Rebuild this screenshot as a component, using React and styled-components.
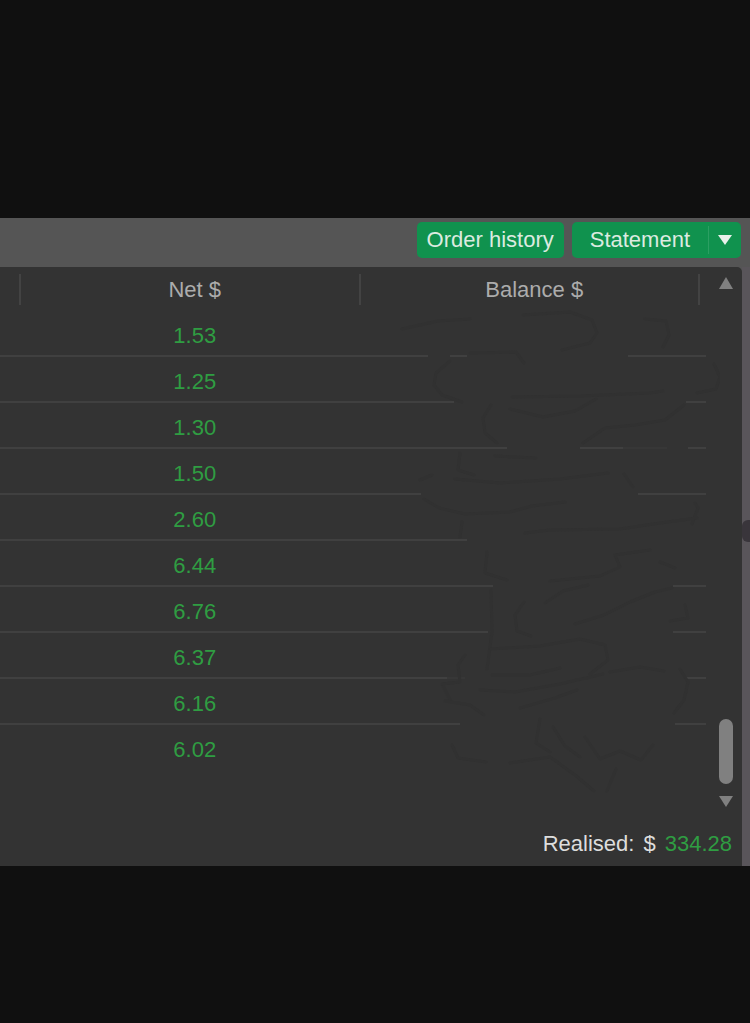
import React from "react";
import styled, { createGlobalStyle } from "styled-components";

const GlobalStyle = createGlobalStyle`
  * { box-sizing: border-box; }
  body {
    margin: 0;
    background: #101010;
    font-family: "Liberation Sans", Arial, sans-serif;
    font-size: 22px;
    line-height: 26px;
  }
  button { font: inherit; color: inherit; border: 0; padding: 0; background: none; cursor: pointer; }
`;

const Page = styled.main`
  min-height: 100vh;
  padding: 218px 0 156px;
`;

const Window = styled.section`
  background: #555555;
`;

const Toolbar = styled.div`
  display: flex;
  justify-content: flex-end;
  gap: 8px;
  padding: 4px 9px 9px;
`;

const ButtonGroup = styled.div`
  display: flex;
  height: 36px;
  align-items: center;
  border-radius: 5px;
  background: #10924e;
  color: #dcebe0;
`;

const TextButton = styled.button`
  height: 36px;
  padding: 0 ${(p) => p.$pad}px;
`;

const MenuButton = styled.button`
  display: flex;
  align-items: center;
  justify-content: center;
  width: 33px;
  height: 28px;
  border-left: 1px solid #2b9f62;
`;

const Content = styled.div`
  display: flex;
`;

const Panel = styled.div`
  flex: 1;
  min-width: 0;
  background: #333333;
  border-top-right-radius: 5px;
`;

const Ledger = styled.div`
  position: relative;
  display: flex;
`;

const TableArea = styled.div`
  flex: 1;
  min-width: 0;
  height: 545px;
`;

const Table = styled.table`
  width: 100%;
  table-layout: fixed;
  border-collapse: separate;
  border-spacing: 0;
`;

const Column = styled.col`
  width: ${(p) => (p.$width ? `${p.$width}px` : "auto")};
`;

const HeadCell = styled.th`
  height: 44px;
  padding: 7px 0 6px;
  font-weight: 400;
  color: #acacac;
`;

const HeadLabel = styled.div`
  height: 31px;
  padding-left: 10px;
  line-height: 31px;
  border-right: 2px solid ${(p) => (p.$blank ? "transparent" : "#434343")};
`;

const Cell = styled.td`
  height: 46px;
  padding: 5px 0 0 8px;
  text-align: center;
  color: #2f9d42;
  border-bottom: 2px solid ${(p) => (p.$last ? "transparent" : "#404040")};
`;

const Redaction = styled.svg`
  position: absolute;
  top: 43px;
  right: 22px;
  width: 340px;
  height: 490px;
  pointer-events: none;
`;

const ScrollBar = styled.div`
  display: flex;
  flex-direction: column;
  align-items: center;
  width: 36px;
  padding: 10px 0 5px 3px;
`;

const ScrollTrack = styled.div`
  flex: 1;
  display: flex;
  align-items: flex-end;
  padding-bottom: 12px;
`;

const ScrollThumb = styled.div`
  width: 14px;
  height: 65px;
  border-radius: 7px;
  background: #808080;
`;

const ArrowButton = styled.button`
  display: flex;
`;

const Footer = styled.footer`
  display: flex;
  justify-content: flex-end;
  gap: 9px;
  padding: 19px 10px 9px;
  color: #dddddd;
`;

const Amount = styled.output`
  color: #2f9d42;
`;

const SideStrip = styled.aside`
  width: 8px;
  padding-top: 253px;
  background: #59555a;
  overflow: hidden;
`;

const SideHandle = styled.button`
  display: block;
  width: 8px;
  height: 22px;
  border-radius: 6px 0 0 6px;
  background: #39353b;
`;

const entries = ["1.53", "1.25", "1.30", "1.50", "2.60", "6.44", "6.76", "6.37", "6.16", "6.02"];

function Triangle({ up, width, height, color }) {
  return (
    <svg width={width} height={height} viewBox="0 0 14 12" preserveAspectRatio="none" aria-hidden="true">
      <path d={up ? "M7 0 14 12H0Z" : "M0 0H14L7 12Z"} fill={color} />
    </svg>
  );
}

function BalanceCover() {
  return (
    <Redaction viewBox="380 310 340 490" aria-hidden="true">
      <g fill="#333333">
        <path d="M428 350H450V362H428ZM467 348H628V362H467Z" />
        <path d="M454 392H686V408H454ZM507 440H580V455H507ZM667 440H688V455H667Z" />
        <path d="M421 485H638V500H421ZM467 530H709V546H467Z" />
        <path d="M493 576H673V592H493ZM488 622H673V638H488Z" />
        <path d="M465 668H686V684H465ZM460 714H675V730H460Z" />
        <path d="M623 440H667V455H623ZM447 668H465V684H447Z" opacity="0.7" />
      </g>
      <g fill="none" stroke="#313131" strokeWidth="3" strokeLinecap="round" strokeLinejoin="round">
        <path d="M402 329 438 321 470 319M523 315 570 312 592 320 597 333 590 343 562 350M645 319 666 321 669 335 663 347" />
        <path d="M470 353 516 352 524 363M450 361 436 373 434 385 442 395 462 402M714 364 720 377 716 389 697 393" />
        <path d="M512 397 580 396 650 393 663 391M491 405 483 418 485 433 497 443M510 409 543 417 575 411 596 399" />
        <path d="M684 405 665 420 635 425 605 428 583 443M460 453 458 470 474 475M495 456 536 458M420 480 432 475" />
        <path d="M455 479 500 483 560 479 608 473M624 474 633 487M424 499 439 508 465 514 510 512 532 506 565 502" />
        <path d="M462 522 460 537M525 533 550 530 620 529 660 523 697 518M695 503 698 508 692 524" />
        <path d="M487 552 485 573 507 580M550 581 600 576 620 567 615 555 650 550M660 562 675 568" />
        <path d="M491 590 492 632 487 669M524 602 515 615 517 631 531 636M545 603 563 591 588 585" />
        <path d="M575 624 604 615 630 602 655 592 672 588M685 605 688 618 670 621" />
        <path d="M491 649 540 646 580 639 605 645 608 660 590 674M465 655 458 665 460 682 442 684 450 700" />
        <path d="M492 675 530 675 560 668M610 672 640 667 664 671M680 669 688 682 684 700 674 713" />
        <path d="M480 690 515 692 560 684 603 674M445 701 470 705 484 715M520 708 555 698 577 690" />
        <path d="M452 745 458 758 486 762M510 763 550 757 575 775 594 791M553 727 565 746 580 757" />
        <path d="M585 737 600 759 620 751 641 760 653 745M607 791 616 769M540 719 536 743 550 752" />
      </g>
    </Redaction>
  );
}

export default function App() {
  return (
    <>
      <GlobalStyle />
      <Page>
        <Window>
          <Toolbar>
            <ButtonGroup>
              <TextButton $pad={10}>Order history</TextButton>
            </ButtonGroup>
            <ButtonGroup>
              <TextButton $pad={18}>Statement</TextButton>
              <MenuButton aria-label="Statement options">
                <Triangle width={14} height={10} color="#e8f1eb" />
              </MenuButton>
            </ButtonGroup>
          </Toolbar>
          <Content>
            <Panel>
              <Ledger>
                <TableArea>
                  <Table>
                    <colgroup>
                      <Column $width={21} />
                      <Column />
                      <Column />
                      <Column $width={6} />
                    </colgroup>
                    <thead>
                      <tr>
                        <HeadCell as="td"><HeadLabel /></HeadCell>
                        <HeadCell scope="col"><HeadLabel>Net $</HeadLabel></HeadCell>
                        <HeadCell scope="col"><HeadLabel>Balance $</HeadLabel></HeadCell>
                        <HeadCell as="td"><HeadLabel $blank /></HeadCell>
                      </tr>
                    </thead>
                    <tbody>
                      {entries.map((net, i) => {
                        const last = i === entries.length - 1;
                        return (
                          <tr key={net}>
                            <Cell $last={last} />
                            <Cell $last={last}>{net}</Cell>
                            <Cell $last={last} />
                            <Cell $last={last} />
                          </tr>
                        );
                      })}
                    </tbody>
                  </Table>
                </TableArea>
                <ScrollBar>
                  <ArrowButton aria-label="Scroll up">
                    <Triangle up width={14} height={12} color="#808080" />
                  </ArrowButton>
                  <ScrollTrack>
                    <ScrollThumb />
                  </ScrollTrack>
                  <ArrowButton aria-label="Scroll down">
                    <Triangle width={14} height={11} color="#808080" />
                  </ArrowButton>
                </ScrollBar>
                <BalanceCover />
              </Ledger>
              <Footer>
                <span>Realised:</span>
                <span>$</span>
                <Amount>334.28</Amount>
              </Footer>
            </Panel>
            <SideStrip>
              <SideHandle aria-label="Toggle side panel" />
            </SideStrip>
          </Content>
        </Window>
      </Page>
    </>
  );
}
